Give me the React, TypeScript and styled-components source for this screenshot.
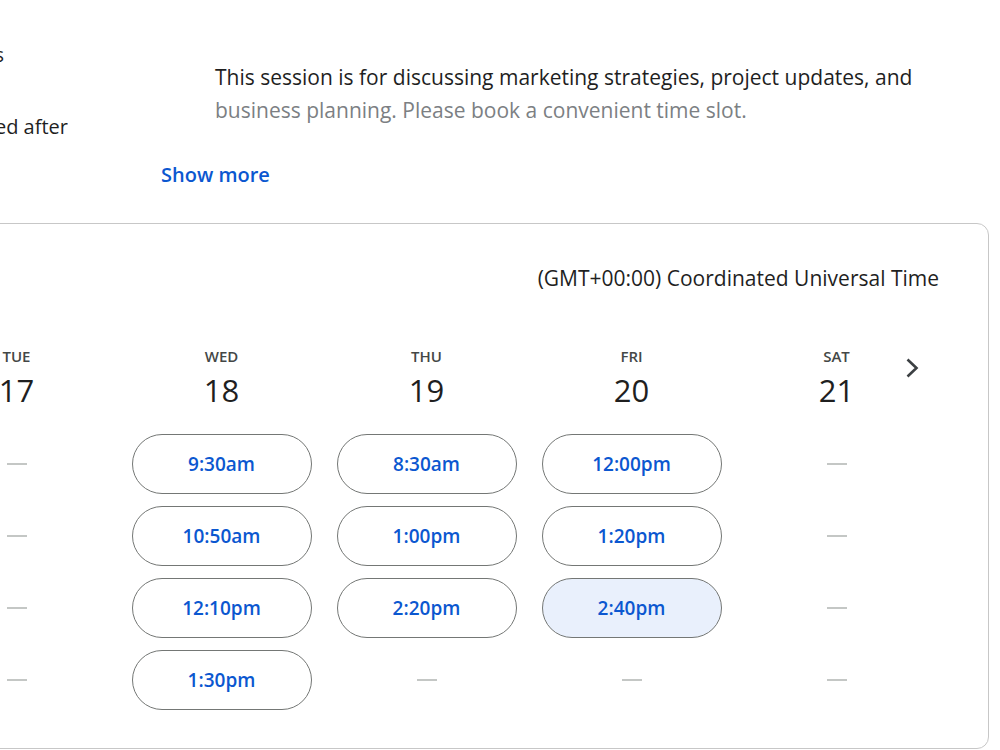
import React from "react";
import styled, { createGlobalStyle } from "styled-components";

interface Day {
  label: string;
  date: number;
  slots: string[];
}

const DAYS: Day[] = [
  { label: "TUE", date: 17, slots: [] },
  { label: "WED", date: 18, slots: ["9:30am", "10:50am", "12:10pm", "1:30pm"] },
  { label: "THU", date: 19, slots: ["8:30am", "1:00pm", "2:20pm"] },
  { label: "FRI", date: 20, slots: ["12:00pm", "1:20pm", "2:40pm"] },
  { label: "SAT", date: 21, slots: [] },
];

const ROWS = 4;
const SELECTED = "FRI-2:40pm";

const GlobalStyle = createGlobalStyle`
  html, body {
    margin: 0;
    padding: 0;
    background: #ffffff;
  }
  body {
    font-family: "Open Sans", Roboto, "Liberation Sans", Arial, sans-serif;
    color: #1f1f1f;
  }
`;

export default function App() {
  return (
    <>
      <GlobalStyle />
      <Page>
        <Intro>
          <SideInfo>
            <ClipLine $width={4}>Sessions</ClipLine>
            <ClipLine $width={68}>Slots are confirmed after</ClipLine>
          </SideInfo>
          <About>
            <Description>
              <DescLine>
                This session is for discussing marketing strategies, project updates, and
              </DescLine>
              <DescLine $faded>business planning. Please book a convenient time slot.</DescLine>
            </Description>
            <ShowMore>Show more</ShowMore>
          </About>
        </Intro>

        <Panel>
          <TimeZone>(GMT+00:00) Coordinated Universal Time</TimeZone>
          <Week>
            {DAYS.map((day) => (
              <DayColumn key={day.label}>
                <DayHead>
                  <DayName>{day.label}</DayName>
                  <DayDate>{day.date}</DayDate>
                </DayHead>
                {Array.from({ length: ROWS }).map((_, i) => {
                  const slot = day.slots[i];
                  return (
                    <SlotCell key={i}>
                      {slot ? (
                        <SlotButton $selected={`${day.label}-${slot}` === SELECTED}>
                          {slot}
                        </SlotButton>
                      ) : (
                        <Dash />
                      )}
                    </SlotCell>
                  );
                })}
              </DayColumn>
            ))}
            <NextWeek aria-label="Next week">
              <svg width="20" height="24" viewBox="0 0 20 24">
                <path
                  d="M4.5 3.5 13.5 12 4.5 20.5"
                  fill="none"
                  stroke="#3c4043"
                  strokeWidth="2.6"
                />
              </svg>
            </NextWeek>
          </Week>
        </Panel>
      </Page>
    </>
  );
}

const Page = styled.div`
  width: 1000px;
  height: 750px;
  overflow: hidden;
`;

const Intro = styled.section`
  display: flex;
  height: 223px;
`;

const SideInfo = styled.div`
  width: 68px;
  display: flex;
  flex-direction: column;
  gap: 38px;
  padding-top: 38px;
  box-sizing: border-box;
`;

// long lines keep their tail in view and spill out to the left
const ClipLine = styled.div<{ $width: number }>`
  width: ${(p) => p.$width}px;
  display: flex;
  justify-content: flex-end;
  overflow: hidden;
  white-space: nowrap;
  font-size: 20px;
  line-height: 34px;
  color: #1f1f1f;
`;

const About = styled.div`
  margin-left: 93px;
  padding-top: 61px;
  display: flex;
  flex-direction: column;
  align-items: flex-start;
`;

const Description = styled.div`
  padding-left: 54px;
  font-size: 21px;
  line-height: 33px;
`;

const DescLine = styled.div<{ $faded?: boolean }>`
  white-space: nowrap;
  color: ${(p) => (p.$faded ? "#7c7f83" : "#1f1f1f")};
`;

const ShowMore = styled.button`
  margin-top: 34px;
  padding: 0;
  border: none;
  background: none;
  font-family: inherit;
  font-size: 20px;
  font-weight: 600;
  line-height: 28px;
  color: #0b57d0;
  cursor: pointer;
`;

const Panel = styled.section`
  margin-left: -137px;
  width: 1126px;
  box-sizing: border-box;
  border: 1px solid #c7c7c7;
  border-radius: 12px;
  padding: 40px 49px 38px 50px;
  display: flex;
  flex-direction: column;
`;

const TimeZone = styled.div`
  align-self: flex-end;
  font-size: 21px;
  line-height: 28px;
  color: #1f1f1f;
`;

const Week = styled.div`
  position: relative;
  margin-top: 54px;
  display: grid;
  grid-template-columns: repeat(5, 205px);
`;

const DayColumn = styled.div`
  display: flex;
  flex-direction: column;
  align-items: center;
  gap: 12px;
`;

const DayHead = styled.div`
  display: flex;
  flex-direction: column;
  align-items: center;
  gap: 4px;
  margin-bottom: 12px;
`;

const DayName = styled.div`
  font-size: 15px;
  font-weight: 600;
  line-height: 20px;
  color: #444746;
`;

const DayDate = styled.div`
  font-size: 31px;
  line-height: 40px;
  color: #1f1f1f;
`;

const SlotCell = styled.div`
  height: 60px;
  width: 180px;
  display: flex;
  align-items: center;
  justify-content: center;
`;

const SlotButton = styled.button<{ $selected?: boolean }>`
  width: 180px;
  height: 60px;
  box-sizing: border-box;
  border: 1px solid #747775;
  border-radius: 30px;
  background: ${(p) => (p.$selected ? "#e9f0fc" : "#ffffff")};
  font-family: inherit;
  font-size: 19px;
  font-weight: 600;
  color: #0b57d0;
  cursor: pointer;
`;

const Dash = styled.span`
  width: 20px;
  height: 2px;
  background: #c4c7c5;
`;

const NextWeek = styled.button`
  position: absolute;
  top: 2px;
  right: 6px;
  width: 40px;
  height: 40px;
  border: none;
  border-radius: 50%;
  background: none;
  padding: 0;
  display: flex;
  align-items: center;
  justify-content: center;
  cursor: pointer;
`;
